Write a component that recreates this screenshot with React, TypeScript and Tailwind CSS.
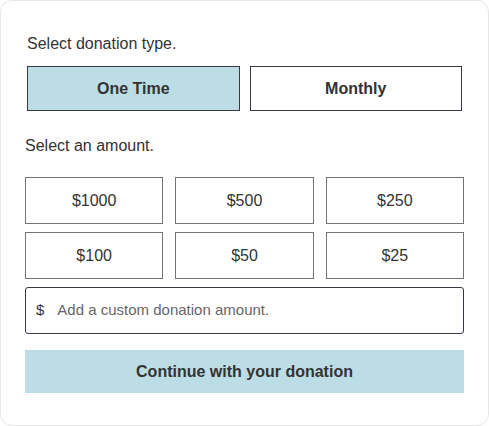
import React from "react";

export default function App() {
  const amounts = ["$1000", "$500", "$250", "$100", "$50", "$25"];
  return (
    <div
      className="w-[489px] h-[426px] bg-white"
      style={{ fontFamily: '"Liberation Sans", Arial, sans-serif' }}
    >
      <div className="w-[489px] h-[426px] border border-[#e6e6e6] rounded-[12px] px-6 pt-[33px] text-[#333]">
        <div className="px-[2px]">
          <div className="text-[16px] leading-[20px]">Select donation type.</div>
          <div className="mt-3 flex gap-[10px]">
            <button className="h-[45px] flex-1 border border-[#333a42] bg-[#bcdde6] text-[16px] font-bold text-[#333]">
              One Time
            </button>
            <button className="h-[45px] flex-1 border border-[#333a42] bg-white text-[16px] font-bold text-[#333]">
              Monthly
            </button>
          </div>
        </div>
        <div className="mt-[25px] text-[16px] leading-[20px]">Select an amount.</div>
        <div className="mt-[21px] grid grid-cols-3 gap-x-3 gap-y-2">
          {amounts.map((a) => (
            <button
              key={a}
              className="h-[47px] border border-[#757575] bg-white text-[16px] text-[#333]"
            >
              {a}
            </button>
          ))}
        </div>
        <div className="mt-2 h-[47px] border border-[#333a42] rounded-[3px] flex items-center pl-[10px] text-[15px]">
          <span className="text-[#333]">$</span>
          <span className="ml-[13px] text-[#666]">Add a custom donation amount.</span>
        </div>
        <button className="mt-4 w-full h-[43px] bg-[#bcdde6] text-[16px] font-bold text-[#333]">
          Continue with your donation
        </button>
      </div>
    </div>
  );
}
